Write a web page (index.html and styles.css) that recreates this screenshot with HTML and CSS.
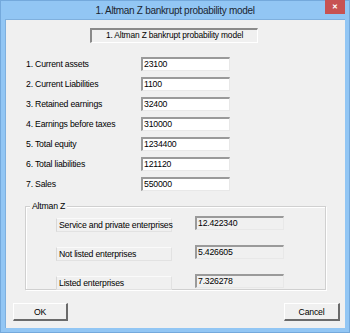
FILE: index.html
```html
<!DOCTYPE html>
<html lang="en">
<head>
    <meta charset="UTF-8">
    <title>1. Altman Z bankrupt probability model</title>
    <link rel="stylesheet" href="styles.css">
</head>
<body>
    <div class="window">
        <div class="titlebar">
            <span class="title">1. Altman Z bankrupt probability model</span>
            <span class="close">&#x2715;</span>
        </div>
        <div class="client">
            <div class="heading">1. Altman Z bankrupt probability model</div>

            <div class="form">
                <label>1. Current assets</label><div class="edit">23100</div>
                <label>2. Current Liabilities</label><div class="edit">1100</div>
                <label>3. Retained earnings</label><div class="edit">32400</div>
                <label>4. Earnings before taxes</label><div class="edit">310000</div>
                <label>5. Total equity</label><div class="edit">1234400</div>
                <label>6. Total liabilities</label><div class="edit">121120</div>
                <label>7. Sales</label><div class="edit">550000</div>
            </div>

            <div class="group">
                <span class="legend">Altman Z</span>
                <div class="result">
                    <div class="caption">Service and private enterprises</div>
                    <div class="edit readonly">12.422340</div>
                </div>
                <div class="result">
                    <div class="caption">Not listed enterprises</div>
                    <div class="edit readonly">5.426605</div>
                </div>
                <div class="result">
                    <div class="caption">Listed enterprises</div>
                    <div class="edit readonly">7.326278</div>
                </div>
            </div>

            <div class="buttons">
                <button class="ok">OK</button>
                <button class="cancel">Cancel</button>
            </div>
        </div>
    </div>
</body>
</html>
```

FILE: styles.css
```css
html, body {
    margin: 0;
    padding: 0;
}
body {
    width: 350px;
    height: 333px;
    font-family: "Liberation Sans", Arial, sans-serif;
    font-size: 8.7px;
    letter-spacing: -0.2px;
    color: #000;
}
.window {
    box-sizing: border-box;
    width: 350px;
    height: 333px;
    background: #92c6f4;
    border: 1px solid #74a9dc;
    padding: 0 4px 4px 4px;
    display: flex;
    flex-direction: column;
}
.titlebar {
    height: 18px;
    flex: none;
    position: relative;
    display: flex;
    align-items: center;
    justify-content: center;
}
.title {
    font-size: 10px;
    letter-spacing: -0.3px;
    color: #1a2530;
    margin-top: 1px;
}
.close {
    position: absolute;
    right: 0;
    top: -1px;
    width: 20px;
    height: 14px;
    background: #c75252;
    color: #fff;
    font-size: 7px;
    font-weight: bold;
    display: flex;
    align-items: center;
    justify-content: center;
}
.client {
    flex: 1;
    background: #f0f0f0;
    border-left: 1px solid #7fb0de;
    border-top: 1px solid #7fb0de;
    display: flex;
    flex-direction: column;
}
.heading {
    box-sizing: border-box;
    width: 168px;
    height: 15px;
    margin: 8px 0 0 84px;
    border-top: 2px solid #8a8a8a;
    border-left: 2px solid #8a8a8a;
    border-bottom: 1px solid #fff;
    border-right: 1px solid #fff;
    font-size: 8.4px;
    letter-spacing: -0.15px;
    line-height: 11px;
    text-align: center;
    white-space: nowrap;
}
.form {
    display: grid;
    grid-template-columns: 115px 89px;
    row-gap: 6px;
    margin: 14px 0 0 20px;
}
.form label {
    line-height: 14px;
    white-space: nowrap;
}
.edit {
    box-sizing: border-box;
    height: 14px;
    background: #fff;
    border-top: 2px solid #9a9a9a;
    border-left: 2px solid #9a9a9a;
    border-bottom: 1px solid #e8e8e8;
    border-right: 1px solid #e8e8e8;
    padding-left: 1px;
    line-height: 11px;
    width: 89px;
}
.edit.readonly {
    background: #f0f0f0;
}
.group {
    position: relative;
    box-sizing: border-box;
    width: 301px;
    height: 84px;
    margin: 15px 0 0 19px;
    border: 1px solid #d0d0d0;
    box-shadow: inset 1px 1px #fff, 1px 1px #fff;
    padding: 9px 0 0 30px;
    display: flex;
    flex-direction: column;
    gap: 13px;
}
.legend {
    position: absolute;
    left: 4px;
    top: -7px;
    padding: 0 2px;
    background: #f0f0f0;
    line-height: 13px;
}
.result {
    display: flex;
    align-items: flex-start;
    gap: 23px;
}
.caption {
    box-sizing: border-box;
    width: 116px;
    height: 14px;
    margin-top: 2px;
    border: 1px solid #e2e2e2;
    border-top-color: #fafafa;
    border-left-color: #d8d8d8;
    line-height: 12px;
    padding-left: 2px;
    white-space: nowrap;
}
.buttons {
    display: flex;
    justify-content: space-between;
    margin: 13px 5px 0 7px;
}
button {
    box-sizing: border-box;
    height: 18px;
    background: #f0f0f0;
    border-top: 1px solid #fff;
    border-left: 1px solid #fff;
    border-bottom: 2px solid #6a6a6a;
    border-right: 2px solid #6a6a6a;
    font-family: "Liberation Sans", Arial, sans-serif;
    font-size: 8.7px;
    letter-spacing: -0.2px;
    color: #000;
    padding: 0;
}
.ok { width: 55px; }
.cancel { width: 56px; }
```
